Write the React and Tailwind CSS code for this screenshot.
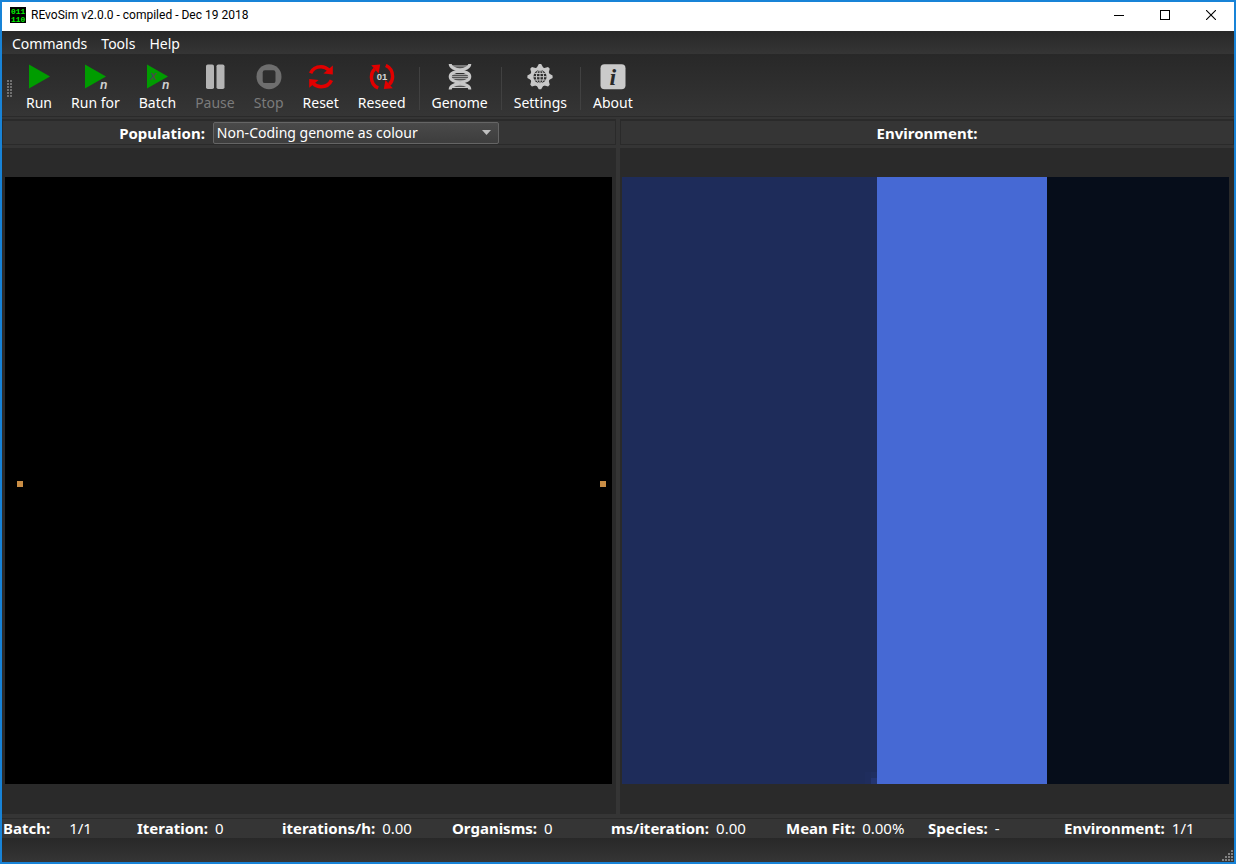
import React from "react";

const base = {
  width: 26,
  height: 26,
  viewBox: "0 0 26 26",
  "aria-hidden": true,
};

const smallN = (
  <text x="18" y="24.5" fontSize="12" fontWeight="700" fontStyle="italic" fill="#d0d0d0" fontFamily="Liberation Sans, sans-serif">
    n
  </text>
);

function RunIcon() {
  return (
    <svg {...base}>
      <path d="M3 .5 24 12.5 3 24.5Z" fill="#009c00" />
    </svg>
  );
}

function RunForIcon() {
  return (
    <svg {...base} overflow="visible">
      <path d="M3 .5 24 12.5 3 24.5Z" fill="#009c00" />
      {smallN}
    </svg>
  );
}

function BatchIcon() {
  return (
    <svg {...base} overflow="visible">
      <path d="M3 .5 24 12.5 3 24.5Z" fill="#009c00" />
      <text x="6" y="16" fontSize="12" fontWeight="700" fontStyle="italic" fill="#46504a" fontFamily="Liberation Sans, sans-serif">
        x
      </text>
      {smallN}
    </svg>
  );
}

function PauseIcon() {
  return (
    <svg {...base} fill="#b4b4b4">
      <rect x="4" y=".5" width="8" height="24.5" rx="1.8" />
      <rect x="14.5" y=".5" width="8" height="24.5" rx="1.8" />
    </svg>
  );
}

function StopIcon() {
  return (
    <svg {...base}>
      <circle cx="13" cy="12.7" r="12.5" fill="#6e6e6e" />
      <rect x="6.7" y="6.3" width="12.8" height="12.8" rx="2.2" fill="#2e2e2e" />
    </svg>
  );
}

function ResetHalf() {
  return (
    <g fill="#e10000">
      <path d="M2.600 9.200C4.600 4.600 8.600 2.700 13 2.700c3.300 0 5.800 1.300 7.800 3.300" fill="none" stroke="#e10000" strokeWidth="3.600" />
      <path d="M24.800 1.600V10.400L15.400 9.400Z" />
    </g>
  );
}

function ResetIcon() {
  return (
    <svg {...base}>
      <ResetHalf />
      <g transform="rotate(180 13 12.700)">
        <ResetHalf />
      </g>
    </svg>
  );
}

function ReseedHalf() {
  return (
    <g fill="#e10000">
      <path d="M9.200 24C4.400 21.800 2.400 17.400 2.400 12.900c0-3.200 1.200-6 3.300-8" fill="none" stroke="#e10000" strokeWidth="3.400" />
      <path d="M2.200 1.200 11.200.4 9.600 9.400Z" />
    </g>
  );
}

function ReseedIcon() {
  return (
    <svg {...base}>
      <ReseedHalf />
      <g transform="rotate(180 13 12.700)">
        <ReseedHalf />
      </g>
      <text x="13" y="16.200" textAnchor="middle" fontSize="9.500" fontWeight="700" fill="#d6d6d6" fontFamily="Liberation Sans, sans-serif">
        01
      </text>
    </svg>
  );
}

function GenomeIcon() {
  return (
    <svg {...base} fill="none" stroke="#c8c8c8">
      <path d="M5 2H21M6 4.300H20M7 8.500H19M5 10.700H21M4 12.700H22M5 14.700H21M7 16.900H19M6 21.100H20M5 23.400H21" strokeWidth="1.100" />
      <path d="M3.200 0C3.200 7.500 22.800 5.200 22.800 12.700S3.200 17.900 3.200 25.400" strokeWidth="3" />
      <path d="M22.800 0C22.800 7.500 3.200 5.200 3.200 12.700S22.800 17.900 22.800 25.400" strokeWidth="3" />
    </svg>
  );
}

function SettingsIcon() {
  return (
    <svg {...base}>
      <g fill="#c8c8c8">
        <circle cx="13" cy="12.700" r="9.800" />
        {[0, 45, 90, 135, 180, 225, 270, 315].map((a) => (
          <path key={a} d="M9 5 11.800.100H14.200L17 5Z" transform={`rotate(${a} 13 12.700)`} />
        ))}
      </g>
      <circle cx="13" cy="12.700" r="6.600" fill="#2e2e2e" />
      <g fill="none" stroke="#c8c8c8" strokeWidth="1">
        <path d="M13 6V19.400M6.300 12.700H19.700M7.300 9.400H18.700M7.300 16H18.700" />
        <ellipse cx="13" cy="12.700" rx="3.600" ry="6.700" />
      </g>
    </svg>
  );
}

function AboutIcon() {
  return (
    <svg {...base}>
      <rect x=".5" y=".200" width="25" height="25" rx="4" fill="#cacaca" />
      <text x="12.800" y="20.700" textAnchor="middle" fontSize="24" fontWeight="700" fontStyle="italic" fill="#2a2a2a" fontFamily="Liberation Serif, serif">
        i
      </text>
    </svg>
  );
}

function ToolButton({ label, icon, disabled }) {
  return (
    <button
      type="button"
      disabled={disabled}
      className="flex flex-col items-center gap-[3px] px-[9px] text-white disabled:text-[#7b7b7b]"
    >
      {icon}
      <span className="leading-[20px]">{label}</span>
    </button>
  );
}

function Separator() {
  return <span className="mr-[2px] ml-[3px] h-[43px] w-px self-center bg-[#414141]" />;
}

function Grip() {
  return (
    <svg width="6" height="18" viewBox="0 0 6 18" aria-hidden="true" shapeRendering="crispEdges" fill="#707070">
      {[0, 3, 6, 9, 12, 15].map((y) => (
        <React.Fragment key={y}>
          <rect x="0" y={y} width="2" height="2" />
          <rect x="3" y={y} width="2" height="2" />
        </React.Fragment>
      ))}
    </svg>
  );
}

function TitleBar() {
  return (
    <header className="flex h-[29px] items-center bg-white pb-[3px] text-black">
      <svg width="16" height="16" viewBox="0 0 16 16" className="ml-2" aria-hidden="true">
        <rect width="16" height="16" fill="#000" />
        <g fill="#00f000" fontFamily="Liberation Mono, monospace" fontSize="8" fontWeight="700">
          <text x="1" y="7">011</text>
          <text x="1" y="15">110</text>
        </g>
      </svg>
      <h1 className="ml-[5px] flex-1 font-[Roboto,sans-serif] text-[12px] leading-4">REvoSim v2.0.0 - compiled - Dec 19 2018</h1>
      <button type="button" aria-label="Minimize" className="flex h-full w-[46px] items-center justify-center">
        <svg width="10" height="11" viewBox="0 0 10 11" shapeRendering="crispEdges" aria-hidden="true">
          <rect x="0" y="5" width="10" height="1" />
        </svg>
      </button>
      <button type="button" aria-label="Maximize" className="flex h-full w-[46px] items-center justify-center">
        <svg width="10" height="10" viewBox="0 0 10 10" fill="none" stroke="#000" aria-hidden="true">
          <rect x=".5" y=".5" width="9" height="9" />
        </svg>
      </button>
      <button type="button" aria-label="Close" className="flex h-full w-[46px] items-center justify-center">
        <svg width="10" height="10" viewBox="0 0 10 10" fill="none" stroke="#000" strokeWidth="1.100" aria-hidden="true">
          <path d="M0 0 10 10M10 0 0 10" />
        </svg>
      </button>
    </header>
  );
}

const stats = [
  ["Batch:", "1/1"],
  ["Iteration:", "0"],
  ["iterations/h:", "0.00"],
  ["Organisms:", "0"],
  ["ms/iteration:", "0.00"],
  ["Mean Fit:", "0.00%"],
  ["Species:", "-"],
  ["Environment:", "1/1"],
];

export default function App() {
  return (
    <div className="flex min-h-screen flex-col border-2 border-[#1883d7] bg-[#353535] font-['Noto_Sans',sans-serif] text-[14px] leading-[20px] text-white">
      <TitleBar />

      <nav className="flex h-[23px] items-center gap-[14px] bg-linear-to-b from-[#282828] to-[#353535] px-[10px] pt-[3px]">
        <button type="button">Commands</button>
        <button type="button">Tools</button>
        <button type="button">Help</button>
      </nav>

      <div className="flex h-[63px] items-center border-b border-[#2a2a2a] bg-linear-to-b from-[#282828] to-[#353535] pt-[7px] pl-[5px]">
        <Grip />
        <div className="ml-1 flex gap-px">
          <ToolButton label="Run" icon={<RunIcon />} />
          <ToolButton label="Run for" icon={<RunForIcon />} />
          <ToolButton label="Batch" icon={<BatchIcon />} />
          <ToolButton label="Pause" icon={<PauseIcon />} disabled />
          <ToolButton label="Stop" icon={<StopIcon />} disabled />
          <ToolButton label="Reset" icon={<ResetIcon />} />
          <ToolButton label="Reseed" icon={<ReseedIcon />} />
          <Separator />
          <ToolButton label="Genome" icon={<GenomeIcon />} />
          <Separator />
          <ToolButton label="Settings" icon={<SettingsIcon />} />
          <Separator />
          <ToolButton label="About" icon={<AboutIcon />} />
        </div>
      </div>

      <main className="mt-[2px] grid flex-1 grid-cols-2 gap-1">
        <section className="flex flex-col">
          <div className="flex h-[26px] items-center justify-center gap-2 border border-t-2 border-[#2a2a2a]">
            <label htmlFor="population" className="text-[15px] font-bold">
              Population:
            </label>
            <div className="grid items-center">
              <select
                id="population"
                className="col-start-1 row-start-1 h-[22px] w-[286px] appearance-none rounded-[2px] border border-[#656565] bg-linear-to-b from-[#4a4a4a] to-[#3d3d3d] px-[3px] text-white"
              >
                <option>Non-Coding genome as colour</option>
              </select>
              <svg
                width="9"
                height="5"
                viewBox="0 0 9 5"
                className="pointer-events-none col-start-1 row-start-1 mr-2 justify-self-end"
                aria-hidden="true"
              >
                <path d="M0 0H9L4.500 5Z" fill="#c0c0c0" />
              </svg>
            </div>
          </div>
          <div className="mt-[3px] flex flex-1 items-center bg-[#2a2a2a] pr-1 pb-[2px] pl-[3px]">
            <svg viewBox="0 0 607 607" className="w-full" role="img" aria-label="Population view" shapeRendering="crispEdges">
              <rect width="607" height="607" fill="#000" />
              <rect x="12" y="304" width="6" height="6" fill="#c98d45" />
              <rect x="595" y="304" width="6" height="6" fill="#c98d45" />
            </svg>
          </div>
        </section>

        <section className="flex flex-col">
          <div className="flex h-[26px] items-center justify-center border border-t-2 border-[#2a2a2a]">
            <h2 className="text-[15px] font-bold">Environment:</h2>
          </div>
          <div className="mt-[3px] flex flex-1 items-center bg-[#2a2a2a] pr-[5px] pb-[2px] pl-[2px]">
            <svg viewBox="0 0 607 607" className="w-full" role="img" aria-label="Environment view" shapeRendering="crispEdges">
              <rect width="255" height="607" fill="#1e2c5a" />
              <rect x="243" y="595" width="6" height="12" fill="#1f2d5d" />
              <rect x="249" y="595" width="6" height="6" fill="#202f60" />
              <rect x="249" y="601" width="6" height="6" fill="#243570" />
              <rect x="255" width="170" height="607" fill="#4669d4" />
              <rect x="425" width="182" height="607" fill="#060d1a" />
            </svg>
          </div>
        </section>
      </main>

      <dl className="mt-1 grid grid-cols-[134fr_145fr_170fr_159fr_175fr_142fr_136fr_170fr] border-t border-[#2a2a2a] pl-px text-[15px] leading-[19px]">
        {stats.map(([label, value], i) => (
          <div key={label} className={i === 0 ? "flex gap-[19px]" : "flex gap-[7px]"}>
            <dt className="font-bold">{label}</dt>
            <dd>{value}</dd>
          </div>
        ))}
      </dl>

      <footer className="flex h-6 items-end justify-end bg-linear-to-b from-[#282828] to-[#353535] pr-px pb-px">
        <svg width="11" height="11" viewBox="0 0 11 11" shapeRendering="crispEdges" fill="#808080" aria-hidden="true">
          {[0, 1, 2, 3].map((row) =>
            [0, 1, 2, 3]
              .filter((col) => col + row >= 3)
              .map((col) => <rect key={`${row}-${col}`} x={col * 3} y={row * 3} width="2" height="2" />)
          )}
        </svg>
      </footer>
    </div>
  );
}
